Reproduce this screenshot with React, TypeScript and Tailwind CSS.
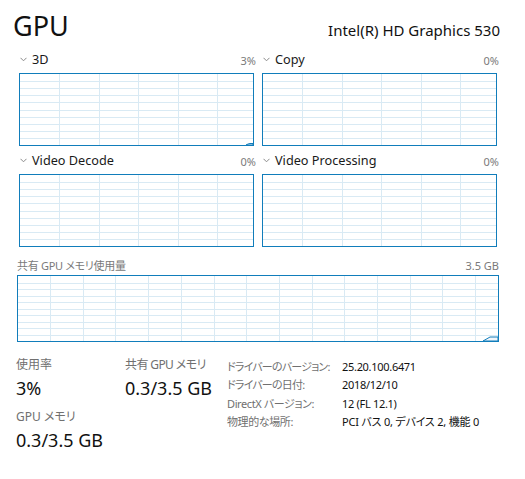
import React from "react";

const FONT = { fontFamily: '"Noto Sans", "Noto Sans CJK JP", sans-serif' };

function Grid({ w, h, cols, rows, colStart, colStep, tail }: { w: number; h: number; cols: number; rows: number; colStart: number; colStep: number; tail?: string }) {
  const vs: number[] = [];
  for (let i = 0; i < cols; i++) vs.push(Math.round(colStart + i * colStep) + 0.5);
  const hs: number[] = [];
  for (let i = 1; i < rows; i++) hs.push(Math.round((i * h) / rows) + 0.5);
  return (
    <svg width={w} height={h} className="block">
      {vs.map((x) => (
        <line key={"v" + x} x1={x} y1={0} x2={x} y2={h} stroke="#d9eaf4" strokeWidth={1} />
      ))}
      {hs.map((y) => (
        <line key={"h" + y} x1={0} y1={y} x2={w} y2={y} stroke="#d9eaf4" strokeWidth={1} />
      ))}
      {tail && <path d={tail} fill="#f1f6fb" stroke="#117dbb" strokeWidth={1} />}
    </svg>
  );
}

function Chevron() {
  return (
    <svg width="7" height="5" viewBox="0 0 7 5" className="block">
      <polyline points="0.5,0.8 3.5,3.8 6.5,0.8" fill="none" stroke="#8a8a8a" strokeWidth="1" />
    </svg>
  );
}

function Panel({ title, pct, tail }: { title: string; pct: string; tail?: string }) {
  return (
    <div className="w-[235px] flex flex-col">
      <div className="flex items-end justify-between h-[23px] pb-[7px]">
        <div className="flex items-baseline">
          <div className="w-[13px] pl-[1px] self-center">
            <Chevron />
          </div>
          <span className="text-[12.7px] text-[#1a1a1a] leading-none">{title}</span>
        </div>
        <span className="text-[11px] text-[#7a7a7a] leading-none mr-[-2px]">{pct}</span>
      </div>
      <div className="border border-[#117dbb]">
        <Grid w={233} h={71} cols={5} rows={10} colStart={39} colStep={39.5} tail={tail} />
      </div>
    </div>
  );
}

export default function App() {
  return (
    <div className="w-[525px] h-[479px] bg-white overflow-hidden relative text-black [font-feature-settings:'palt']" style={FONT}>
      <div className="flex items-baseline justify-between pl-[13px] pr-[25px] pt-[6px]">
        <span className="text-[27px] leading-[40px] text-[#111]">GPU</span>
        <span className="text-[15px] text-[#111] leading-[20px]">Intel(R) HD Graphics 530</span>
      </div>
      <div className="pl-[19px] mt-[4px] flex flex-col gap-[5px]">
        <div className="flex gap-[8px]">
          <Panel title="3D" pct="3%" tail="M226,71 L228,70 L230,69.5 L233,69.5 L233,71 Z" />
          <Panel title="Copy" pct="0%" />
        </div>
        <div className="flex gap-[8px]">
          <Panel title="Video Decode" pct="0%" />
          <Panel title="Video Processing" pct="0%" />
        </div>
      </div>
      <div className="pl-[17px] w-[499px] mt-[13px]">
        <div className="flex items-end justify-between h-[11px]">
          <span className="text-[11px] text-[#7a7a7a] leading-none tracking-[-0.3px]">共有 GPU メモリ使用量</span>
          <span className="text-[11px] text-[#7a7a7a] leading-none">3.5 GB</span>
        </div>
        <div className="border border-[#117dbb] mt-[4px]">
          <Grid w={480} h={65} cols={14} rows={10} colStart={32} colStep={32.7} tail="M465,65 L472,61 L480,61 L480,65 Z" />
        </div>
      </div>
      <div className="flex items-start pl-[16px] mt-[15px]">
        <div className="w-[109px] flex flex-col">
          <span className="text-[12px] text-[#707070] leading-[16px]">使用率</span>
          <span className="text-[18px] text-[#111] leading-[26px] mt-[2px]">3%</span>
          <span className="text-[12px] text-[#707070] leading-[16px] mt-[8px]">GPU メモリ</span>
          <span className="text-[18px] text-[#111] leading-[26px] mt-[2px]">0.3/3.5 GB</span>
        </div>
        <div className="w-[102px] flex flex-col">
          <span className="text-[12px] text-[#707070] leading-[16px] tracking-[-0.6px]">共有 GPU メモリ</span>
          <span className="text-[18px] text-[#111] leading-[26px] mt-[2px]">0.3/3.5 GB</span>
        </div>
        <div className="grid grid-cols-[115px_auto] content-start text-[11px] leading-[18.5px] mt-[0.5px] whitespace-nowrap">
          <span className="text-[#707070] tracking-[-0.8px]">ドライバーのバージョン:</span>
          <span className="text-[#111] tracking-[-0.3px]">25.20.100.6471</span>
          <span className="text-[#707070] tracking-[-0.8px]">ドライバーの日付:</span>
          <span className="text-[#111] tracking-[-0.3px]">2018/12/10</span>
          <span className="text-[#707070] tracking-[-0.4px]">DirectX バージョン:</span>
          <span className="text-[#111] tracking-[-0.3px]">12 (FL 12.1)</span>
          <span className="text-[#707070] tracking-[-0.4px]">物理的な場所:</span>
          <span className="text-[#111] tracking-[-0.2px]">PCI バス 0, デバイス 2, 機能 0</span>
        </div>
      </div>
    </div>
  );
}
